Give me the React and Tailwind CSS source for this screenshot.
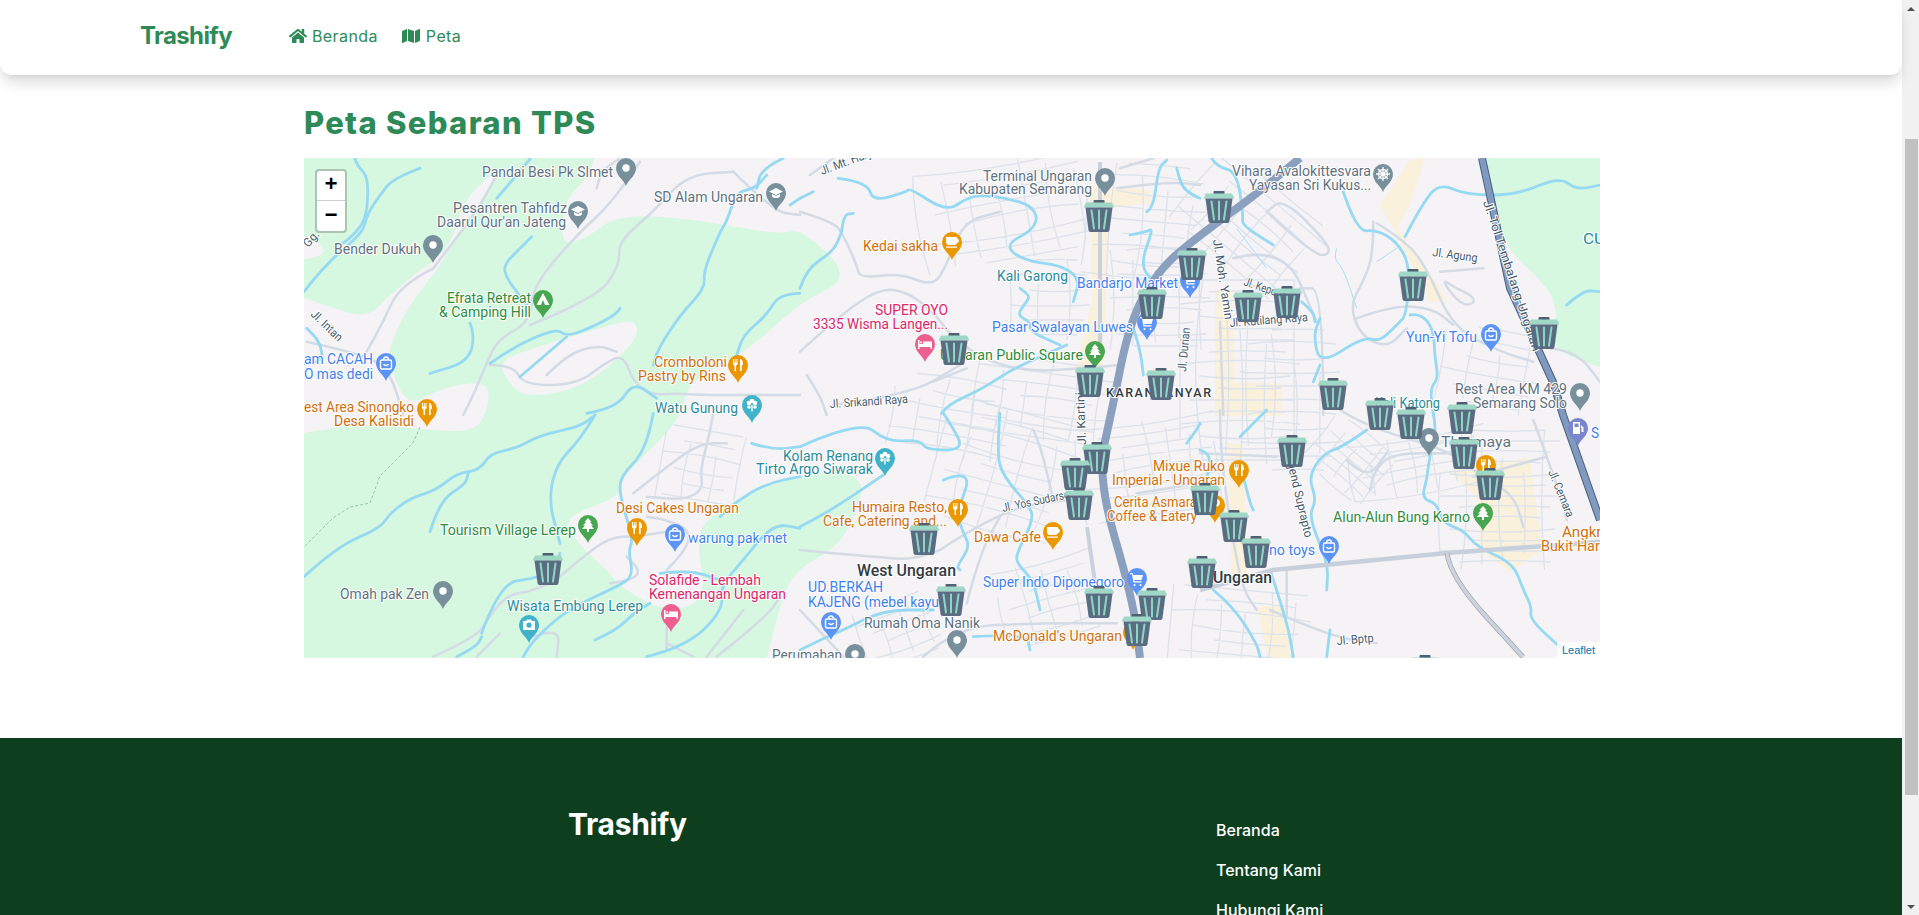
import React from "react";
import { FaHome, FaMap } from "react-icons/fa";

// map features are noted in crop coordinates: origin of the crop + 3x pixels
const tile = (ox, oy, list) =>
  list.map((s) =>
    s.split(" ").map((p) => {
      const [x, y] = p.split(",").map(Number);
      return [ox + x / 3, oy + y / 3];
    })
  );

const parsePts = (s) => s.split(" ").map((p) => p.split(",").map(Number));

// rounds a line of points through the midpoints of its segments
const smooth = (pts, closed = false) => {
  const f = (n) => n.toFixed(1);
  const mid = (a, b) => [(a[0] + b[0]) / 2, (a[1] + b[1]) / 2];
  if (closed) {
    const start = mid(pts[pts.length - 1], pts[0]);
    let d = `M${f(start[0])} ${f(start[1])}`;
    pts.forEach((p, i) => {
      const m = mid(p, pts[(i + 1) % pts.length]);
      d += `Q${f(p[0])} ${f(p[1])} ${f(m[0])} ${f(m[1])}`;
    });
    return d + "Z";
  }
  let d = `M${f(pts[0][0])} ${f(pts[0][1])}`;
  for (let i = 1; i < pts.length - 1; i++) {
    const m = mid(pts[i], pts[i + 1]);
    d += `Q${f(pts[i][0])} ${f(pts[i][1])} ${f(m[0])} ${f(m[1])}`;
  }
  const last = pts[pts.length - 1];
  return d + `L${f(last[0])} ${f(last[1])}`;
};

const rivers = [
  ...tile(300, 155, [
    "360,40 280,70 240,120 200,180 190,230 120,290 60,350 12,410",
    "165,10 170,30 200,60 205,120 195,200 150,250 120,270",
    "12,625 70,625 60,560 20,520",
    "590,130 620,95 650,60 690,12",
    "695,245 660,280 610,330 620,370 650,410 680,450",
    "510,505 525,540 505,620 390,655",
    "570,625 650,570 770,520 800,545 880,515 945,480 960,460",
    "660,665 800,545",
    "1500,415 1440,415 1400,480 1330,540 1310,600",
    "1400,60 1370,100 1310,110 1280,200 1260,230 1210,350 1215,400 1140,480 1075,580 1060,630",
    "860,775 950,760 1000,680 1070,730",
    "1450,10 1385,40 1370,100",
    "1470,150 1500,130",
  ]),
  ...tile(300, 410, [
    "12,500 110,410 240,355 270,310 330,265 410,240 470,190 540,180 570,130 650,115 720,75 840,50 885,15",
    "390,365 420,270 495,225 505,190",
    "885,15 840,90 770,160 745,270 780,400",
    "545,670 600,520 700,505 750,490 780,430",
    "1060,10 1040,120 960,200 960,260 1000,390 985,420 1000,500 950,530 800,600 700,690 670,740",
    "885,690 950,660 1000,610 1050,580",
    "1040,740 1160,710 1270,600 1260,530 1330,450 1420,340 1500,355",
    "1080,490 1170,480 1260,510",
    "1260,320 1300,280 1400,220 1500,200",
    "1355,100 1420,120 1500,110",
    "470,740 530,710 545,680",
  ]),
  ...tile(800, 155, [
    "115,70 200,80 220,140 320,110 330,100 440,170 500,130 545,120 620,130 690,150 715,190 690,230 630,260 630,290 690,320 780,330 840,370 820,440",
    "0,130 40,110",
    "125,230 130,180 160,175",
    "0,400 20,340 100,290 125,230",
    "660,400 690,420 680,440 650,480 690,500 690,530 780,570",
    "425,775 440,750 550,700 640,640 800,570",
    "990,240 1040,230 1060,220 1020,330 1060,380",
    "1040,170 1060,160 1075,40 1100,15",
    "1200,130 1150,110 1130,40",
    "1000,520 1020,580 1030,660",
  ]),
  ...tile(800, 410, [
    "0,110 180,30 260,95 360,90 380,120 495,120 450,40 430,10",
    "0,350 80,310 250,195",
    "430,210 520,175 470,310 490,370 510,410 470,470 480,480",
    "600,10 590,130 610,200 690,290 700,330 650,430 650,460 700,510 720,600",
    "0,720 60,690 130,660 250,600 400,600",
    "520,680 680,670 690,720",
    "1160,100 1190,60 1200,40",
  ]),
  ...tile(1200, 155, [
    "35,10 50,35 110,50 130,180 125,210 220,270",
    "430,110 470,230 530,225 590,260 630,330 620,480 590,510 540,560 490,545 360,630 340,540 360,490",
    "615,245 670,140 720,85 800,120 950,120 1080,65 1130,105 1200,90",
    "1100,450 1150,405 1200,410",
    "630,480 660,475 700,520 705,610 715,670 690,700 700,780",
    "305,440 340,470 345,500",
    "360,630 340,680",
  ]),
  ...tile(1200, 410, [
    "200,0 120,80",
    "500,60 430,110 370,130 325,200 350,270 325,320 385,460 380,540",
    "700,10 710,60 690,130 680,210 665,265 710,280 730,340 790,360 830,410 940,460 970,540 995,590 990,630 1090,720",
    "0,120 40,130 10,240 15,300",
    "130,200 150,280 160,300",
    "40,540 100,590 170,700 180,740",
    "210,480 260,630 280,740",
    "390,660 380,740",
  ]),
];

const thinRivers = tile(1200, 155, [
  "410,280 400,310 430,340 470,460",
  "530,320 590,280",
  "110,220 200,340",
]);

const roads = [
  ...tile(300, 155, [
    "1020,20 940,140 830,240 700,390 690,500 600,550 570,600 520,720 490,780",
    "400,340 300,390 250,500 200,590",
    "690,510 890,430 960,330 955,260 1060,170 1160,60 1300,50",
    "890,100 900,50 960,10",
    "570,630 640,630 670,690 830,690 920,620 970,600 1000,680 1050,720 1130,715 1200,720 1330,720 1500,720",
    "740,660 800,600 890,570 950,590",
    "20,560 200,600 270,650 310,780",
    "1300,50 1420,170 1500,180",
    "400,340 460,260 530,170 590,60",
  ]),
  ...tile(300, 410, [
    "400,740 530,680 560,630 620,555 690,545 770,510 830,455 930,380 1010,380 1130,360",
    "1240,10 1230,70 1200,180 1210,240 1150,270 1040,260",
    "1100,480 1160,420 1170,360 1100,330 1040,320",
    "930,520 1000,510 1020,480 980,440",
    "1100,720 1100,610",
    "1220,740 1330,600",
    "1100,700 1180,740",
    "1250,740 1400,620 1440,560",
    "1000,250 1100,170 1200,100 1280,100",
    "530,740 600,670",
    "700,680 780,650 770,740",
  ]),
  ...tile(800, 155, [
    "0,170 100,200 130,240 170,330 180,370 300,355 400,395 440,330 490,200 600,170",
    "0,590 120,480 240,400 320,410 400,470 450,540 560,620 700,650 840,640 960,630",
    "400,680 500,640",
    "20,660 60,720 80,780",
    "100,750 330,720 480,630",
    "950,100 1100,80 1200,90",
    "960,40 1060,10",
    "30,60 100,10",
  ]),
  ...tile(800, 410, [
    "420,420 600,300 800,270",
    "0,420 100,430 220,440 330,450 420,420",
    "500,580 540,430 600,320",
    "370,740 470,650 700,640 950,640",
    "700,60 720,100 760,270",
    "1010,250 1200,220",
    "0,600 130,740",
  ]),
  ...tile(1200, 155, [
    "60,500 70,780",
    "520,200 520,300 490,380 450,450 480,540 560,580 620,520",
    "530,205 620,260 680,340 760,520 900,590 1000,620",
    "470,490 580,450 700,460 760,510",
    "200,170 340,300 390,300 380,260 250,130 200,170",
    "100,310 250,270 350,500",
    "370,780 370,400 300,400",
    "720,350 850,340",
    "770,400 840,430 790,460 720,370 770,400",
    "1050,580 1130,590 1200,680",
  ]),
  ...tile(1200, 410, [
    "420,0 500,50 740,120 800,170 940,250 970,350",
    "1040,140 820,200",
    "60,0 60,130 100,400 130,540 170,600",
    "260,480 260,620",
    "210,600 390,680 530,700",
    "0,130 230,140",
    "510,240 520,180 580,130 740,130",
    "440,150 500,210 560,130",
    "1000,30 1060,190 1100,330",
  ]),
];

// blocks of small streets around the town
const blocks = [
  [1010, 210, 90, 50, -10, 14],
  [1045, 400, 70, 40, 8, 13],
  [1005, 470, 70, 60, 15, 15],
  [1145, 225, 60, 60, 5, 14],
  [1160, 300, 50, 50, 0, 12],
  [1150, 470, 70, 50, -8, 12],
  [1250, 230, 70, 50, 40, 13],
  [1240, 370, 60, 90, 0, 12],
  [1290, 400, 50, 70, 0, 14],
  [1350, 460, 40, 30, 40, 10],
  [1420, 465, 70, 30, -10, 11],
  [1500, 500, 60, 70, 0, 11],
  [1240, 630, 70, 40, 5, 13],
  [1490, 370, 50, 40, 10, 15],
  [950, 420, 60, 40, 10, 14],
  [1050, 600, 50, 40, -15, 13],
  [900, 630, 40, 30, -20, 12],
  [700, 470, 40, 40, 10, 14],
  [1050, 300, 40, 40, 0, 15],
];

const streetPath = (() => {
  let d = "";
  const line = (a, b, bend) => {
    const mx = (a[0] + b[0]) / 2 + (b[1] - a[1]) * bend;
    const my = (a[1] + b[1]) / 2 - (b[0] - a[0]) * bend;
    d += `M${a[0].toFixed(1)} ${a[1].toFixed(1)}Q${mx.toFixed(1)} ${my.toFixed(1)} ${b[0].toFixed(1)} ${b[1].toFixed(1)}`;
  };
  blocks.forEach(([cx, cy, w, h, deg, step], b) => {
    const a = (deg * Math.PI) / 180;
    const pt = (x, y) => [cx + x * Math.cos(a) - y * Math.sin(a), cy + x * Math.sin(a) + y * Math.cos(a)];
    let i = 0;
    for (let y = -h; y <= h; y += step) {
      const cut = ((i * 7 + b * 3) % 5) * 0.16;
      line(pt(-w * (1 - cut), y), pt(w * (1 - cut * 0.5), y), (((i + b) % 5) - 2) * 0.03);
      i++;
    }
    i = 0;
    for (let x = -w; x <= w; x += step * 1.9) {
      const cut = ((i * 5 + b) % 4) * 0.2;
      line(pt(x, -h * (1 - cut)), pt(x, h * (1 - cut * 0.4)), (((i * 3 + b) % 5) - 2) * 0.04);
      i++;
    }
  });
  return d;
})();

// outlines run past the map's edge; doubled points keep their corners tight
const greens = [
  "280,145 280,140 285,140 595,140 595,158 587,178 567,198 562,222 563,245 587,238 617,215 687,218 780,235 800,228 853,277 800,302 747,352 687,382 683,415 647,453 620,480 620,497 563,517 577,543 610,573 620,587 667,613 707,600 697,543 703,523 733,500 800,473 867,473 853,523 833,550 800,567 783,593 767,658 760,680 285,680 280,680 280,675",
  "1484,140 1487,158 1493,197 1502,245 1550,288 1558,318 1550,350 1615,372 1620,372 1620,367 1620,145 1620,140 1615,140",
];

const grayPatches = [
  "492,172 495,180 477,205 453,240 443,262 417,295 400,322 387,355 393,372 403,398 417,402 433,392 467,382 490,385 487,413 473,432 427,430 367,423 304,433 285,436 285,292 304,298 333,308 367,318 390,295 417,272 433,262 453,240 463,202",
  "500,362 520,352 600,328 637,318 637,342 583,388 527,398 507,382",
  "285,228 325,245 322,258 285,260",
];

const pinColor = {
  gray: "#78909c",
  orange: "#eb9700",
  blue: "#5c94f5",
  green: "#47a64f",
  pink: "#ec5f8f",
  teal: "#40b2c9",
  purple: "#7986cb",
};

const PinGlyph = ({ type }) => {
  switch (type) {
    case "hat":
      return <path d="M0 -5L7 -1.5L0 2L-7 -1.5ZM-4 1V3.5C-2 5.5 2 5.5 4 3.5V1L0 3Z" fill="#fff" />;
    case "food":
      return <path d="M-5 -6V-1.5C-5 0 -4 .5 -3.5 .7V6H-2V.7C-1.5 .5 -.5 0 -.5 -1.5V-6H-1.5V-2.5H-2.3V-6H-3.2V-2.5H-4V-6ZM2 -6C4.5 -6 5 -3 5 0H3.7V6H2Z" fill="#fff" />;
    case "cup":
      return <path d="M-6 -5H5V-3.5C7.5 -3.5 7.5 1 5 1C4.5 2.5 3 3 2 3H-3C-5 3 -6 1.500 -6 0ZM-6 4.500H5V5.800H-6Z" fill="#fff" />;
    case "bag":
      return (
        <g fill="none" stroke="#fff" strokeWidth="1.4">
          <rect x="-5.500" y="-3" width="11" height="9" rx="1.500" />
          <path d="M-2.500 -3C-2.500 -7 2.500 -7 2.500 -3M-2.500 1C-1.500 3 1.500 3 2.500 1" />
        </g>
      );
    case "tree":
      return <path d="M0 -7L3.500 -3H2L5 .5H3L6 4H1V7H-1V4H-6L-3 .5H-5L-2 -3H-3.500Z" fill="#fff" />;
    case "tent":
      return <path d="M0 -7L6.500 5H2L0 0L-2 5H-6.500Z" fill="#fff" />;
    case "camera":
      return <path d="M-6 -4H-3L-2 -5.500H2L3 -4H6V5H-6ZM0 -2.500A2.600 2.600 0 1 0 0 2.700A2.600 2.600 0 1 0 0 -2.500Z" fill="#fff" fillRule="evenodd" />;
    case "bed":
      return <path d="M-7 -4H-5.500V0H-2V-2.500H7V5H5.500V3H-5.500V5H-7ZM-4.800 -2.500H-3V-.8H-4.800Z" fill="#fff" />;
    case "cart":
      return <path d="M-7 -5H-4.500L-4 -3H6L4.500 2H-2.800L-2.300 3.200H4.500V4.500H-3.500L-5 -3.800H-7Z M-2.500 6A1 1 0 1 0 -2.490 6ZM3.500 6A1 1 0 1 0 3.510 6Z" fill="#fff" />;
    case "flower":
      return (
        <g fill="#fff">
          <circle cx="-3" cy="-2" r="2.300" />
          <circle cx="3" cy="-2" r="2.300" />
          <circle cx="0" cy="-4" r="2.300" />
          <circle cx="-3" cy="2" r="1.800" />
          <circle cx="3" cy="2" r="1.800" />
          <rect x="-.7" y="0" width="1.400" height="6.500" />
        </g>
      );
    case "wheel":
      return (
        <g fill="none" stroke="#fff" strokeWidth="1.300">
          <circle r="4.500" />
          <path d="M-7 0H7M0 -7V7M-5 -5L5 5M5 -5L-5 5" />
        </g>
      );
    case "gas":
      return <path d="M-5 -6H2V6H-5ZM-3.500 -4.500V-1H.5V-4.500ZM3 -3L5.500 -.5V4H3.500V0H3Z" fill="#fff" fillRule="evenodd" />;
    case "parking":
      return <path d="M-3 -6H1.500C6 -6 6 1.500 1.500 1.500H-.5V6H-3ZM-.5 -3.800V-.7H1.200C3 -.7 3 -3.800 1.200 -3.800Z" fill="#fff" fillRule="evenodd" />;
    default:
      return <circle r="3.700" fill="#fff" />;
  }
};

// [tip x, tip y, colour, glyph]
const pins = [
  [626, 186, "gray"],
  [578, 229, "gray", "hat"],
  [776, 211, "gray", "hat"],
  [433, 263, "gray"],
  [543, 318, "green", "tent"],
  [386, 381, "blue", "bag"],
  [427, 427, "orange", "food"],
  [738, 383, "orange", "food"],
  [752, 423, "teal", "flower"],
  [588, 543, "green", "tree"],
  [637, 546, "orange", "food"],
  [675, 552, "blue", "bag"],
  [443, 609, "gray"],
  [529, 643, "teal", "camera"],
  [671, 632, "pink", "bed"],
  [1105, 196, "gray"],
  [952, 260, "orange", "cup"],
  [925, 362, "pink", "bed"],
  [1095, 369, "green", "tree"],
  [1190, 298, "blue", "cart"],
  [1147, 340, "blue", "cart"],
  [885, 476, "teal", "flower"],
  [958, 527, "orange", "food"],
  [1053, 550, "orange", "cup"],
  [831, 640, "blue", "bag"],
  [957, 658, "gray"],
  [855, 672, "gray"],
  [1137, 596, "blue", "cart"],
  [1383, 192, "gray", "wheel"],
  [1491, 352, "blue", "bag"],
  [1580, 411, "gray"],
  [1239, 488, "orange", "food"],
  [1215, 523, "orange", "parking"],
  [1429, 456, "gray"],
  [1486, 483, "orange", "food"],
  [1483, 531, "green", "tree"],
  [1329, 564, "blue", "bag"],
  [1578, 446, "purple", "gas"],
  [1133, 650, "orange", "food"],
];

const c = {
  gray: "#5f7280",
  orange: "#d1700c",
  blue: "#3f7ff0",
  green: "#2f8c3c",
  pink: "#e0246a",
  teal: "#2a8c9a",
  dark: "#333a40",
};

// [text, left, right, baseline, colour]
const labels = [
  ["Pandai Besi Pk Slmet", 482, 613, 177, c.gray],
  ["Pesantren Tahfidz", 453, 567, 213, c.gray],
  ["Daarul Qur'an Jateng", 437, 566, 227, c.gray],
  ["SD Alam Ungaran", 654, 763, 202, c.gray],
  ["Bender Dukuh", 334, 421, 254, c.gray],
  ["Efrata Retreat", 447, 531, 303, c.green],
  ["& Camping Hill", 439, 531, 317, c.green],
  ["am CACAH", 304, 373, 364, c.blue],
  ["O mas dedi", 304, 373, 379, c.blue],
  ["est Area Sinongko", 304, 414, 412, c.orange],
  ["Desa Kalisidi", 334, 414, 426, c.orange],
  ["Cromboloni", 654, 727, 367, c.orange],
  ["Pastry by Rins", 638, 726, 381, c.orange],
  ["Watu Gunung", 655, 738, 413, c.teal],
  ["Kolam Renang", 783, 873, 461, c.teal],
  ["Tirto Argo Siwarak", 756, 873, 474, c.teal],
  ["Tourism Village Lerep", 440, 576, 535, c.green],
  ["Desi Cakes Ungaran", 616, 739, 513, c.orange],
  ["warung pak met", 688, 787, 543, c.blue],
  ["Solafide - Lembah", 649, 761, 585, c.pink],
  ["Kemenangan Ungaran", 649, 786, 599, c.pink],
  ["Wisata Embung Lerep", 507, 643, 611, c.teal],
  ["Omah pak Zen", 340, 429, 599, c.gray],
  ["Perumahan", 772, 842, 660, c.gray],
  ["Terminal Ungaran", 983, 1092, 181, c.gray],
  ["Kabupaten Semarang", 959, 1092, 194, c.gray],
  ["Kedai sakha", 863, 938, 251, c.orange],
  ["Kali Garong", 997, 1068, 281, c.teal],
  ["Bandarjo Market", 1077, 1178, 288, c.blue],
  ["SUPER OYO", 875, 948, 315, c.pink],
  ["3335 Wisma Langen...", 813, 948, 329, c.pink],
  ["Pasar Swalayan Luwes", 992, 1133, 332, c.blue],
  ["Ungaran Public Square", 940, 1083, 360, c.green],
  ["CU", 1583, 1605, 244, c.teal],
  ["Vihara Avalokittesvara", 1232, 1371, 176, c.gray],
  ["Yayasan Sri Kukus...", 1249, 1371, 190, c.gray],
  ["Yun-Yi Tofu", 1406, 1477, 342, c.blue],
  ["Rest Area KM 429", 1455, 1567, 394, c.gray],
  ["Semarang Solo", 1473, 1567, 408, c.gray],
  ["Kali Katong", 1375, 1440, 408, c.teal],
  ["Thermaya", 1441, 1511, 447, c.gray],
  ["Mixue Ruko", 1153, 1225, 471, c.orange],
  ["Imperial - Ungaran", 1112, 1225, 485, c.orange],
  ["Cerita Asmara", 1114, 1197, 507, c.orange],
  ["Coffee & Eatery", 1107, 1197, 521, c.orange],
  ["Humaira Resto,", 852, 947, 512, c.orange],
  ["Cafe, Catering and...", 823, 947, 526, c.orange],
  ["Dawa Cafe", 974, 1041, 542, c.orange],
  ["UD.BERKAH", 808, 883, 592, c.blue],
  ["KAJENG (mebel kayu", 808, 939, 607, c.blue],
  ["Rumah Oma Nanik", 864, 980, 628, c.gray],
  ["Super Indo Diponegoro", 983, 1124, 587, c.blue],
  ["McDonald's Ungaran", 993, 1122, 641, c.orange],
  ["no toys", 1269, 1315, 555, c.blue],
  ["Alun-Alun Bung Karno", 1333, 1470, 522, c.green],
  ["Angkring", 1562, 1622, 537, c.orange],
  ["Bukit Harmoni", 1541, 1632, 551, c.orange],
  ["SPBU", 1591, 1625, 438, c.blue],
];

// [text, x1, y1, x2, y2] road names follow their road
const roadNames = [
  ["Jl. Srikandi Raya", 830, 408, 908, 403],
  ["Jl. Mt. Haryono", 822, 175, 890, 150],
  ["Gg.", 308, 248, 320, 235],
  ["Jl. Intan", 310, 315, 338, 342],
  ["Jl. Yos Sudarso", 1003, 512, 1070, 498],
  ["Jl. Kartini", 1086, 445, 1084, 392],
  ["Jl. Durian", 1186, 372, 1190, 328],
  ["Jl. Moh. Yamin", 1213, 240, 1225, 320],
  ["Jl. Kepodang", 1243, 285, 1295, 303],
  ["Jl. Kutilang Raya", 1230, 327, 1308, 321],
  ["Jl. Agung", 1432, 256, 1477, 262],
  ["Jl. Tol Tembalang-Ungaran", 1483, 202, 1533, 352],
  ["Jl. Cemara", 1548, 472, 1567, 518],
  ["Jl. Bptp", 1337, 645, 1374, 642],
  ["Jl. Tjend Suprapto", 1283, 445, 1305, 538],
];

// top-left corner of each bin
const bins = [
  [1084, 200], [1177, 248], [1137, 287], [939, 333], [1075, 365], [1146, 368],
  [1082, 442], [1060, 458], [1064, 488], [909, 523], [936, 584], [1084, 586],
  [1137, 588], [1122, 614], [1187, 556], [1190, 483], [1204, 191], [1233, 290],
  [1272, 286], [1398, 269], [1529, 317], [1318, 378], [1365, 398], [1396, 407],
  [1447, 402], [1277, 435], [1449, 437], [1475, 468], [1219, 510], [1241, 536],
  [533, 553], [1410, 655],
];

const Bin = ({ x, y }) => (
  <g transform={`translate(${x} ${y})`}>
    <rect x="9.500" y="0" width="11" height="4" rx="1" fill="#4f6073" />
    <path d="M2 2.500H28L30 6.500V7.500H0V6.500Z" fill="#9fd8c6" />
    <path d="M1.500 7.500H28.500L25.500 30C25.300 31.300 24.500 32 23.500 32H6.500C5.500 32 4.700 31.300 4.500 30Z" fill="#5a6c82" />
    <path d="M7.500 10.500L10 28.500M15 10.500V28.500M22.500 10.500L20 28.500" stroke="#8ed6c3" strokeWidth="2" strokeLinecap="round" fill="none" />
  </g>
);

const MapArt = () => (
  <svg
    viewBox="304 158 1296 500"
    className="block w-full h-full font-['Roboto',sans-serif]"
    fill="none"
  >
    <rect x="304" y="158" width="1296" height="500" fill="#f5f3f5" />

    {greens.map((pts, i) => (
      <path key={i} d={smooth(parsePts(pts), true)} fill="#d6f7e0" />
    ))}
    {grayPatches.map((pts, i) => (
      <path key={i} d={smooth(parsePts(pts), true)} fill="#f5f3f5" />
    ))}

    <g fill="#faf1dc">
      <polygon points="1090,185 1150,190 1150,203 1107,208 1106,300 1102,370 1075,372 1092,300" />
      <polygon points="1380,205 1410,160 1425,158 1410,205 1397,228 1448,300 1430,302 1400,240" />
      <polygon points="1215,290 1232,290 1235,382 1282,384 1282,416 1215,416" />
      <polygon points="1450,470 1530,458 1542,550 1510,572 1480,550 1478,500" />
      <polygon points="1257,607 1283,605 1292,658 1268,658" />
      <polygon points="1227,443 1243,445 1248,575 1232,577" />
    </g>

    <path d={streetPath} stroke="#dde2ea" strokeWidth="1.300" />
    {roads.map((pts, i) => (
      <path key={i} d={smooth(pts)} stroke="#d4dbe5" strokeWidth="2.500" strokeLinecap="round" />
    ))}
    <polyline
      points="420,427 413,443 380,476 370,503 350,507 333,518 304,547"
      stroke="#97c8b0"
      strokeWidth="1"
      strokeDasharray="3 2"
    />

    {thinRivers.map((pts, i) => (
      <path key={i} d={smooth(pts)} stroke="#a8e0f5" strokeWidth="1" />
    ))}
    {rivers.map((pts, i) => (
      <path key={i} d={smooth(pts)} stroke="#96d9f2" strokeWidth="2.800" strokeLinecap="round" />
    ))}

    {/* main roads */}
    <polyline points="1100,162 1100,355" stroke="#c9d1dc" strokeWidth="4" />
    <polyline points="1087,527 1100,617" stroke="#c9d1dc" strokeWidth="4" />
    <polyline points="1200,590 1273,570 1447,553 1600,542" stroke="#c6cfdb" strokeWidth="4.500" />
    <path d={smooth(parsePts("1447,553 1450,577 1523,657"))} stroke="#9fa6ae" strokeWidth="5" />
    <path d={smooth(parsePts("1447,553 1450,577 1523,657"))} stroke="#ccd3dd" strokeWidth="3.500" />
    <path
      d={smooth(parsePts("1300,158 1262,190 1200,235 1160,268 1130,320 1112,410 1097,477 1133,600 1140,658"))}
      stroke="#8ba0bf"
      strokeWidth="8"
    />
    <polyline points="1482,158 1510,288 1553,382 1563,415 1600,520" stroke="#4b5f7d" strokeWidth="8" />
    <polyline points="1482,158 1510,288 1553,382 1563,415 1600,520" stroke="#7f99bf" strokeWidth="6" />

    {pins.map(([x, y, color, glyph], i) => (
      <g key={i}>
        <path
          d={`M${x} ${y}C${x - 2} ${y - 6} ${x - 10} ${y - 10} ${x - 10} ${y - 18}A10 10 0 1 1 ${x + 10} ${y - 18}C${x + 10} ${y - 10} ${x + 2} ${y - 6} ${x} ${y}Z`}
          fill={pinColor[color]}
        />
        <g transform={`translate(${x} ${y - 18})`}>
          <PinGlyph type={glyph} />
        </g>
      </g>
    ))}

    <g stroke="#fff" strokeWidth="2" strokeLinejoin="round" style={{ paintOrder: "stroke" }}>
      {labels.map(([text, x1, x2, y, color]) => (
        <text key={text} x={x1} y={y} fontSize="14" fill={color} textLength={x2 - x1} lengthAdjust="spacingAndGlyphs">
          {text}
        </text>
      ))}
      {roadNames.map(([text, x1, y1, x2, y2]) => (
        <text
          key={text}
          transform={`translate(${x1} ${y1}) rotate(${(Math.atan2(y2 - y1, x2 - x1) * 180) / Math.PI})`}
          fontSize="12"
          fill="#475a6b"
          textLength={Math.hypot(x2 - x1, y2 - y1)}
          lengthAdjust="spacingAndGlyphs"
        >
          {text}
        </text>
      ))}
      <text x="857" y="576" fontSize="16" fontWeight="500" fill={c.dark} textLength="99" lengthAdjust="spacingAndGlyphs">
        West Ungaran
      </text>
      <text x="1213" y="583" fontSize="16" fontWeight="500" fill={c.dark} textLength="59" lengthAdjust="spacingAndGlyphs">
        Ungaran
      </text>
      <text x="1106" y="397" fontSize="12.500" fontWeight="500" fill={c.dark} letterSpacing="2" textLength="107">
        KARANGANYAR
      </text>
    </g>

    {bins.map(([x, y]) => (
      <Bin key={`${x}-${y}`} x={x} y={y} />
    ))}
  </svg>
);

const App = () => {
  return (
    <div className="flex h-[915px] overflow-hidden bg-white font-['Inter',sans-serif]">
      <div className="flex-1 min-w-0 flex flex-col">
        <nav className="h-[75px] shrink-0 flex items-center pl-[140px] pb-[3px] bg-white rounded-b-xl shadow-[0_10px_15px_-3px_rgba(0,0,0,0.15),0_4px_6px_-4px_rgba(0,0,0,0.1)] relative z-10 text-[#2e8b57]">
          <span className="text-2xl font-bold tracking-[-0.6px] w-[149px]">Trashify</span>
          <a className="flex items-center gap-[5px] text-base tracking-[0.4px]">
            <FaHome className="text-[18px]" />
            Beranda
          </a>
          <a className="flex items-center gap-[6px] text-base tracking-[0.4px] ml-[24px]">
            <FaMap className="text-[18px]" />
            Peta
          </a>
        </nav>

        <main className="w-[1296px] ml-[304px] shrink-0 pb-20">
          <h1 className="h-[83px] pt-[30px] text-[31px] leading-9 font-extrabold tracking-[1.3px] text-[#2e8b57]">
            Peta Sebaran TPS
          </h1>
          <div className="relative h-[500px] overflow-hidden">
            <MapArt />
            <div className="absolute left-[11px] top-[11px] w-[32px] rounded border-2 border-black/20 bg-clip-padding font-['Liberation_Mono',monospace] font-bold text-[22px] text-black">
              <div className="h-[30px] flex items-center justify-center bg-white rounded-t-sm border-b border-[#ccc]">+</div>
              <div className="h-[30px] flex items-center justify-center bg-white rounded-b-sm">−</div>
            </div>
            <div className="absolute right-0 bottom-0 h-4 px-[5px] bg-white/80 font-['Liberation_Sans',sans-serif] text-[11px] leading-4 text-[#0078a8]">
              Leaflet
            </div>
          </div>
        </main>

        <footer className="flex-1 flex bg-[#0d3f1f] text-white pl-[568px] pt-[68px]">
          <div className="w-[648px] text-3xl font-bold tracking-[-0.3px] leading-9">Trashify</div>
          <ul className="pt-[12px] text-base font-medium leading-6 flex flex-col gap-4">
            <li>Beranda</li>
            <li>Tentang Kami</li>
            <li>Hubungi Kami</li>
          </ul>
        </footer>
      </div>

      {/* page scrollbar */}
      <div className="w-[17px] shrink-0 flex flex-col bg-[#f1f1f1]">
        <div className="h-[17px] flex items-center justify-center">
          <div className="w-0 h-0 border-x-4 border-x-transparent border-b-4 border-b-[#505050]" />
        </div>
        <div className="mt-[122px] h-[656px] ml-[3px] mr-px bg-[#c1c1c1]" />
        <div className="mt-auto h-[17px] flex items-center justify-center">
          <div className="w-0 h-0 border-x-4 border-x-transparent border-t-4 border-t-[#505050]" />
        </div>
      </div>
    </div>
  );
};

export default App;
